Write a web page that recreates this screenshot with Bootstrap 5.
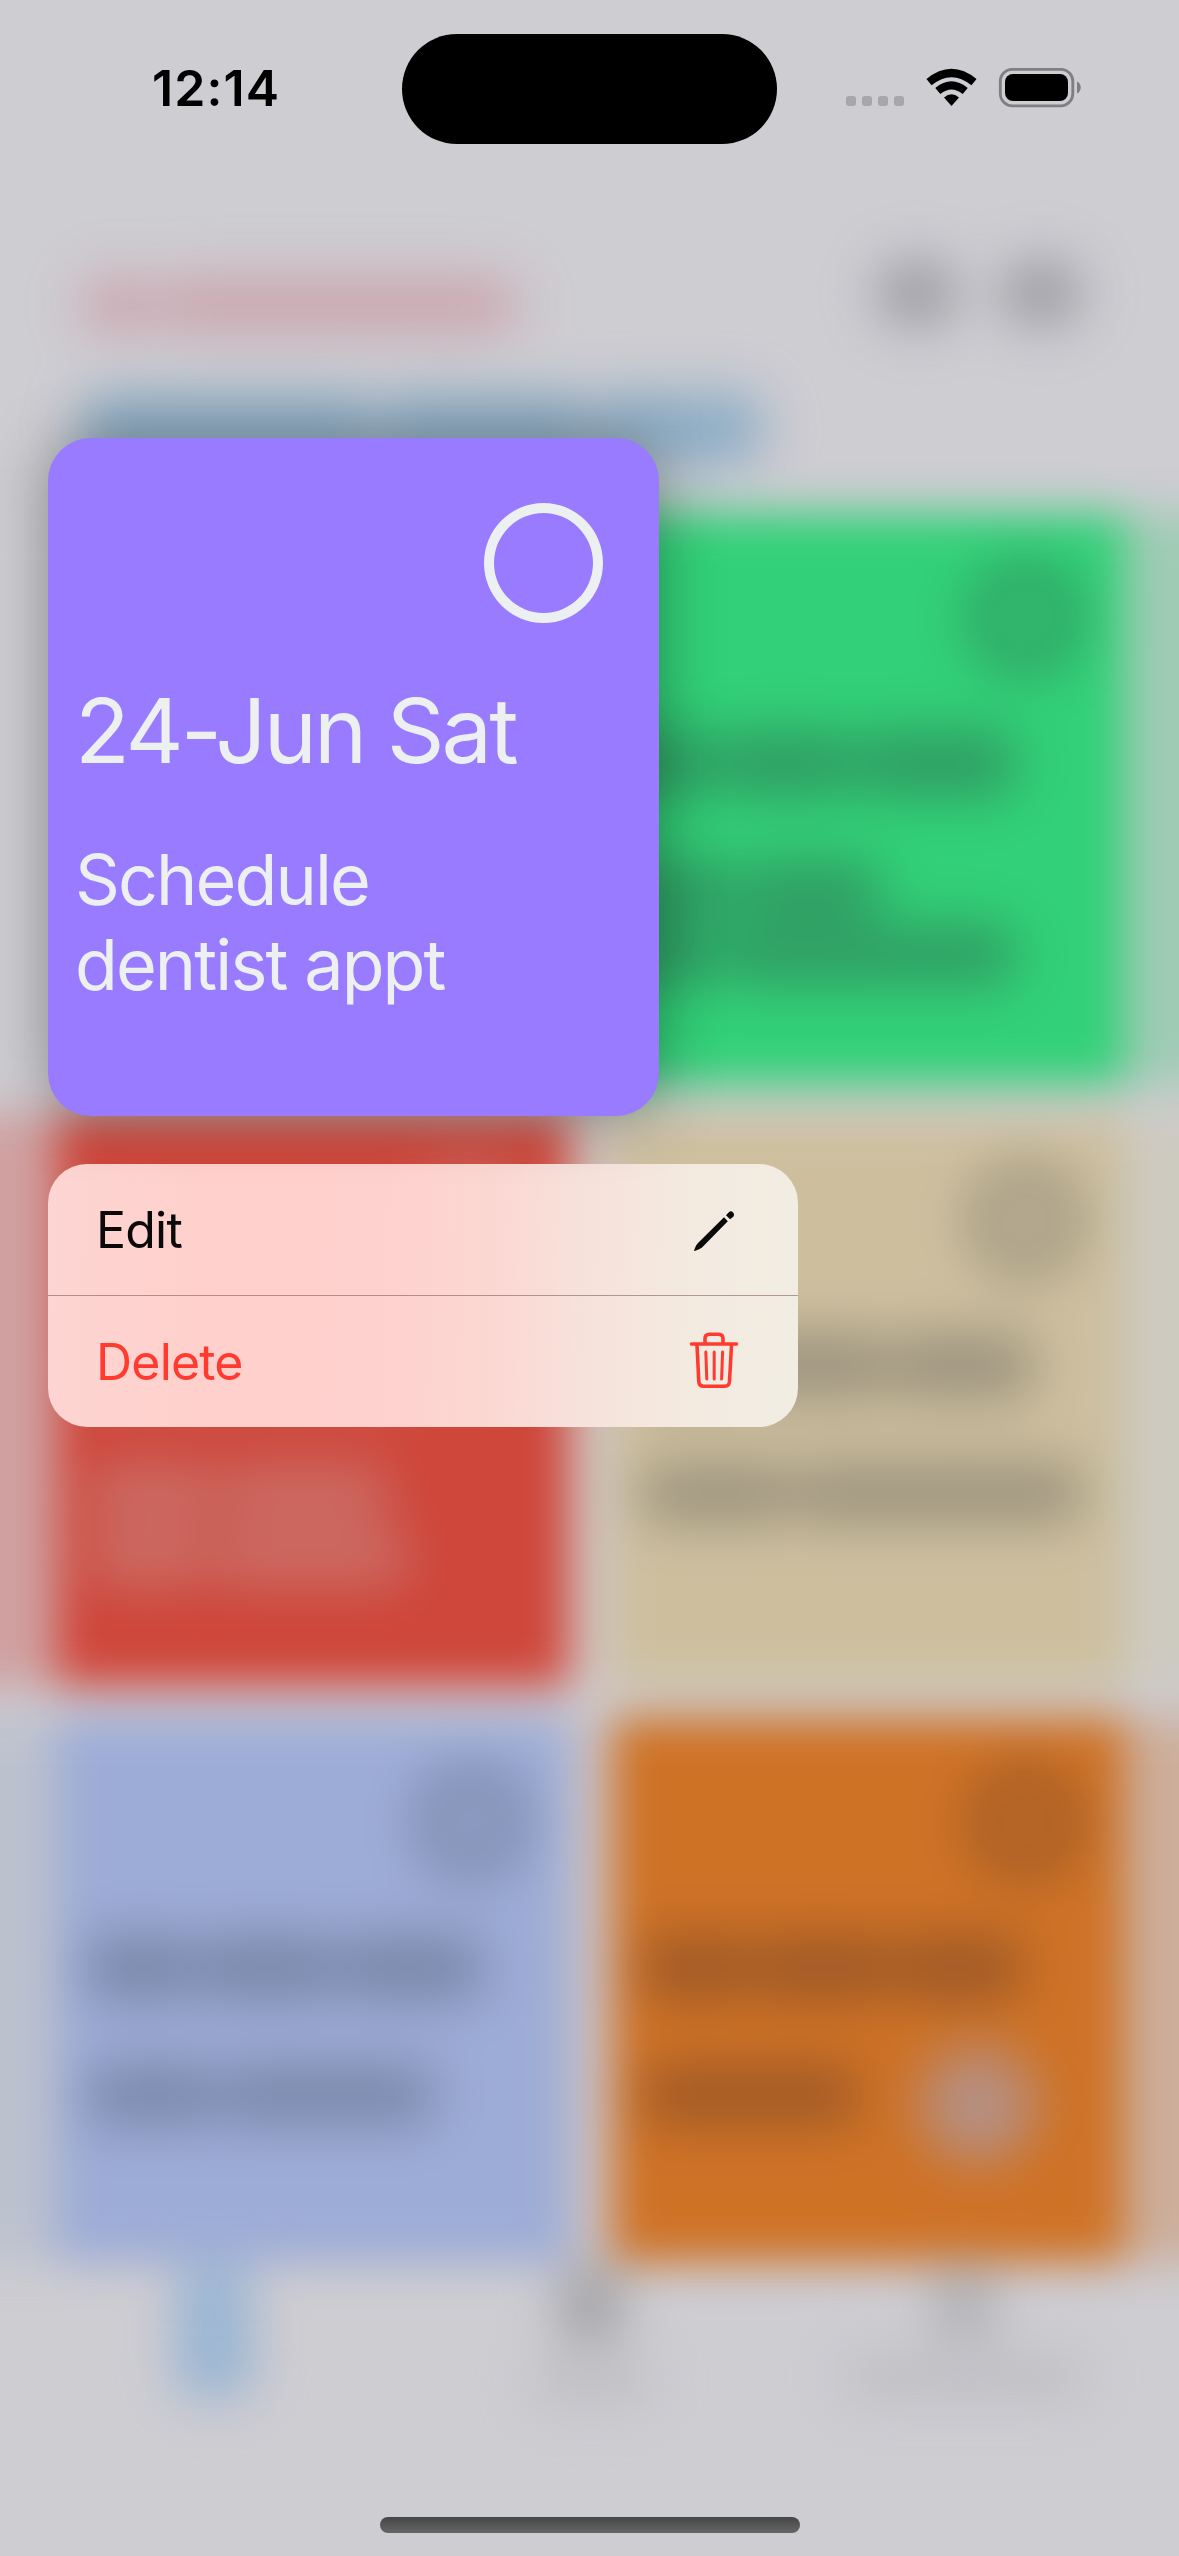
<!DOCTYPE html>
<html lang="en">
<head>
<meta charset="utf-8">
<meta name="viewport" content="width=device-width, initial-scale=1">
<title>Tasks</title>
<link href="https://cdn.jsdelivr.net/npm/bootstrap@5.3.0/dist/css/bootstrap.min.css" rel="stylesheet">
<style>
  body{background:#cecdd2;font-family:Inter,"Liberation Sans",sans-serif;margin:0}
  .screen{width:1179px;height:2556px;background:#cecdd2}
  /* blurred app behind the menu */
  .backdrop-app{filter:blur(22px);z-index:0}
  .app-head{height:513px;padding:262px 85px 0 82px}
  .blob{border-radius:24px;flex:none;filter:blur(15px)}
  .head-a .blob{background:#c9838f;opacity:.55;height:54px}
  .head-icons{gap:46px;padding-right:14px}
  .head-icons .blob{background:#77767c;opacity:.58;height:62px;width:78px}
  .head-b{margin-top:38px}
  .head-b .blob{background:#6f9fc0;opacity:.72;height:70px}
  .tile-row{height:572px;margin:0 -80px 30px;padding:0 135px 0 137px;gap:42px}
  .tile-row.last-row{height:546px;margin-bottom:0}
  .row-a{background:linear-gradient(90deg,#cecdd2 55%,#9fcbb4 90%)}
  .row-b{background:linear-gradient(90deg,#cfa0a0 12%,#cfc6c4 50%,#cdcac0 88%)}
  .row-c{background:linear-gradient(90deg,#bcc1ce 12%,#cbc4c6 50%,#ccae9b 90%)}
  .tile{flex:1 1 0;padding:46px 40px 0 28px}
  .tile .blob{background:currentColor}
  .t-green{background:#32d078;color:rgba(45,85,70,.42)}
  .t-red{background:#cf463a;color:rgba(198,165,165,.4)}
  .t-sand{background:#cdbf9e;color:rgba(80,75,75,.38)}
  .t-blue{background:#9dacd6;color:rgba(75,85,110,.42)}
  .t-orange{background:#ce7226;color:rgba(100,60,40,.44)}
  .ring-soft{width:122px;height:122px;margin:-2px;border-radius:50%;border:40px solid currentColor;flex:none;filter:blur(12px);opacity:.8}
  .date-soft{margin-top:54px}
  .date-soft .blob{height:66px}
  .task-soft{margin-top:64px}
  .task-soft.second{margin-top:4px}
  .task-soft .blob{height:60px}
  .fab-soft{right:88px;bottom:100px;width:116px;height:116px;background:#b0979a;opacity:.8;filter:blur(16px)}
  .tabs-soft{height:294px;padding:0 95px 0 175px}
  .tab-soft{color:#a6a6aa}
  .tab-soft .glyph{width:68px;height:84px;background:currentColor;border-radius:24px;filter:blur(11px)}
  .tab-soft .cap{height:44px;background:#bfbec3;margin-top:14px;border-radius:16px;filter:blur(12px)}
  /* foreground */
  .front{z-index:1}
  .status{height:438px;padding:34px 97px 0 152px}
  .clock{font-size:50px;font-weight:600;line-height:1;letter-spacing:1.1px;color:#000;width:250px;padding-top:29px}
  .island{width:375px;height:110px;background:#000}
  .status-icons{width:236px;height:40px;margin:34px 0 0 68px}
  .lifted{width:611px;height:678px;margin-left:48px;border-radius:43px;background:#987bff;color:#ecf0f1;border:0;padding:65px 56px 0 27px;box-shadow:0 0 62px rgba(0,0,0,.34)}
  .ring{width:119px;height:120px;border:10px solid #ecf0f1}
  .lift-date{font-size:90px;line-height:100px;margin-top:58px;letter-spacing:-2.9px;white-space:nowrap;font-weight:400}
  .lift-task{font-size:70px;line-height:85px;margin-top:56px;letter-spacing:-1.9px}
  .menu{width:750px;height:263px;margin:48px 0 0 48px;border-radius:39px;overflow:hidden;border:0;
    background:linear-gradient(92deg,#fdd5d2 0,#ffd0cc 22%,#ffd1ce 45%,#fbd8d3 60%,#f6e3dc 73%,#f3eae0 86%,#f1ede2 100%)}
  .menu .list-group-item{background:none;border:0;height:132px;padding:0 54px 0 48px;font-size:50px;line-height:1;color:#0a0a0a;letter-spacing:-.8px}
  .menu .list-group-item:first-child{border-bottom:1px solid rgba(120,85,75,.55)}
  .menu .list-group-item.del{color:#ff3b30;height:131px}
  .home{width:420px;height:16px;bottom:23px;background:linear-gradient(#444645,#666);z-index:2}
</style>
</head>
<body>
<div class="screen position-relative overflow-hidden">

  <div class="backdrop-app position-absolute top-0 start-0 w-100 h-100" aria-hidden="true">
    <div class="app-head">
      <div class="d-flex justify-content-between align-items-start">
        <div class="head-a d-flex pt-3"><div class="blob" style="width:74px"></div><div class="blob" style="width:362px"></div></div>
        <div class="head-icons d-flex"><div class="blob"></div><div class="blob"></div></div>
      </div>
      <div class="head-b d-flex pt-4">
        <div class="blob" style="width:295px"></div><div class="blob" style="width:215px"></div><div class="blob" style="width:170px"></div>
      </div>
    </div>

    <div class="tile-row row-a d-flex">
      <div class="flex-fill" style="flex-basis:0"></div>
      <div class="tile t-green">
        <div class="d-flex justify-content-end"><div class="ring-soft"></div></div>
        <div class="date-soft d-flex"><div class="blob" style="width:105px"></div><div class="blob" style="width:145px"></div><div class="blob" style="width:160px"></div></div>
        <div class="task-soft d-flex"><div class="blob" style="width:135px"></div><div class="blob" style="width:140px"></div></div>
        <div class="task-soft second d-flex"><div class="blob" style="width:115px"></div><div class="blob" style="width:295px"></div></div>
      </div>
    </div>

    <div class="tile-row row-b d-flex">
      <div class="tile t-red">
        <div class="d-flex justify-content-end"><div class="ring-soft"></div></div>
        <div class="date-soft d-flex"><div class="blob" style="width:340px"></div></div>
        <div class="task-soft d-flex"><div class="blob" style="width:135px"></div><div class="blob" style="width:170px"></div></div>
        <div class="task-soft second d-flex"><div class="blob" style="width:125px"></div><div class="blob" style="width:200px"></div></div>
      </div>
      <div class="tile t-sand">
        <div class="d-flex justify-content-end"><div class="ring-soft"></div></div>
        <div class="date-soft d-flex"><div class="blob" style="width:105px"></div><div class="blob" style="width:145px"></div><div class="blob" style="width:145px"></div></div>
        <div class="task-soft d-flex"><div class="blob" style="width:155px"></div><div class="blob" style="width:290px"></div></div>
      </div>
    </div>

    <div class="tile-row row-c last-row d-flex">
      <div class="tile t-blue">
        <div class="d-flex justify-content-end"><div class="ring-soft"></div></div>
        <div class="date-soft d-flex"><div class="blob" style="width:110px"></div><div class="blob" style="width:143px"></div><div class="blob" style="width:145px"></div></div>
        <div class="task-soft d-flex"><div class="blob" style="width:135px"></div><div class="blob" style="width:215px"></div></div>
      </div>
      <div class="tile t-orange position-relative">
        <div class="d-flex justify-content-end"><div class="ring-soft"></div></div>
        <div class="date-soft d-flex"><div class="blob" style="width:110px"></div><div class="blob" style="width:143px"></div><div class="blob" style="width:130px"></div></div>
        <div class="task-soft d-flex"><div class="blob" style="width:220px"></div></div>
        <div class="fab-soft position-absolute rounded-circle"></div>
      </div>
    </div>

    <div class="tabs-soft d-flex justify-content-between align-items-start">
      <div class="tab-soft" style="color:#9ab5d3"><div class="glyph" style="height:136px;width:78px"></div></div>
      <div class="tab-soft d-flex flex-column align-items-center" style="margin-left:85px"><div class="glyph" style="height:82px"></div><div class="cap" style="width:115px"></div></div>
      <div class="tab-soft d-flex flex-column align-items-center" style="color:#b3b2b7"><div class="glyph" style="height:78px"></div><div class="cap" style="width:240px"></div></div>
    </div>
  </div>

  <div class="front position-relative">
    <div class="status d-flex align-items-start">
      <div class="clock">12:14</div>
      <div class="island rounded-pill"></div>
      <svg class="status-icons" viewBox="0 0 236 40" aria-hidden="true">
        <g fill="#a7a7a9"><rect x="1" y="28" width="10" height="10" rx="3"/><rect x="17" y="28" width="10" height="10" rx="3"/><rect x="33" y="28" width="10" height="10" rx="3"/><rect x="49" y="28" width="10" height="10" rx="3"/></g>
        <g fill="none" stroke="#000" stroke-width="8">
          <path d="M84 14.2Q106.500 -4.200 129 14.200"/>
          <path d="M92.800 23Q106.500 11.800 120.200 23"/>
        </g>
        <path d="M99 29.500Q106.500 23.200 114 29.500L106.500 38Z"/>
        <rect x="155.300" y="1.300" width="72.500" height="36.500" rx="12" fill="none" stroke="#7f7f81" stroke-width="2.800"/>
        <rect x="160" y="6" width="63" height="27" rx="8"/>
        <path d="M232 13.500C237 15.500 237 23.500 232 25.500Z" fill="#7f7f81"/>
      </svg>
    </div>

    <div class="lifted card">
      <div class="d-flex justify-content-end"><div class="ring rounded-circle"></div></div>
      <div class="lift-date">24-Jun Sat</div>
      <div class="lift-task">Schedule<br>dentist appt</div>
    </div>

    <div class="menu list-group">
      <button type="button" class="list-group-item list-group-item-action d-flex justify-content-between align-items-center">
        <span>Edit</span>
        <svg width="60" height="60" viewBox="684 1200 60 60" aria-hidden="true" fill="#0a0a0a"><path d="M724 1217.200L727.800 1221.200L702 1247.500Q700 1249 694.600 1251Q693.800 1251 694.200 1250Q696 1245 697.500 1243.500Z"/><path d="M726 1215.200L728.600 1212.400Q731 1210.300 733 1212.400Q735 1214.500 733 1217L730 1219.300Z"/></svg>
      </button>
      <button type="button" class="list-group-item list-group-item-action del d-flex justify-content-between align-items-center">
        <span>Delete</span>
        <svg width="60" height="64" viewBox="684 1330 60 64" aria-hidden="true" fill="none" stroke="#ff3b30" stroke-width="3.600" stroke-linecap="round" stroke-linejoin="round"><path d="M691.500 1344H736.500M697 1345L698.800 1381.500Q699.200 1386.200 703.500 1386.200H725Q729.200 1386.200 729.500 1381.500L731.500 1345M705 1343V1338.500Q705 1334.200 709.500 1334.200H718.500Q723 1334.200 723 1338.500V1343"/><path stroke-width="3" d="M705.800 1352L706.800 1379M714.200 1352V1379M722.600 1352L721.600 1379"/></svg>
      </button>
    </div>
  </div>

  <div class="home position-absolute start-50 translate-middle-x rounded-pill"></div>
</div>
<script src="https://cdn.jsdelivr.net/npm/bootstrap@5.3.0/dist/js/bootstrap.bundle.min.js"></script>
</body>
</html>
